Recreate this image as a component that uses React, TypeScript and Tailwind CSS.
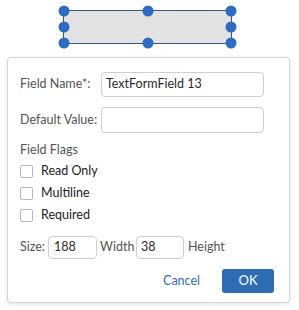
import React from "react";

const handles = [
  "left-0 top-0",
  "left-1/2 top-0",
  "left-full top-0",
  "left-0 top-1/2",
  "left-full top-1/2",
  "left-0 top-full",
  "left-1/2 top-full",
  "left-full top-full",
];

function Checkbox({ label }: { label: string }) {
  return (
    <label className="flex h-[22px] items-center gap-[8px]">
      <span className="h-[13px] w-[13px] rounded-[2px] border border-[#b8b8b8] bg-white" />
      <span className="text-[#1a1a1a]">{label}</span>
    </label>
  );
}

export default function App() {
  return (
    <div
      className="h-[310px] w-[299px] bg-white text-[12.5px] text-[#555]"
      style={{ fontFamily: "Lato, 'Open Sans', sans-serif" }}
    >
      <div className="h-[57px] pt-[10px]">
        <div className="relative ml-[63px] h-[34px] w-[169px] border border-[#3a5578] bg-[#e3e3e3]">
          {handles.map((h) => (
            <span
              key={h}
              className={`absolute ${h} h-[11px] w-[11px] -translate-x-1/2 -translate-y-1/2 rounded-full bg-[#2d6cc0]`}
            />
          ))}
        </div>
      </div>

      <div className="ml-[7px] flex h-[246px] w-[283px] flex-col rounded-[4px] border border-[#d6d6d6] bg-white px-[12px] pt-[14px] shadow-[0_1px_4px_rgba(0,0,0,0.12)]">
        <div className="flex h-[25px] items-center">
          <span className="w-[81px]">Field Name*:</span>
          <div className="flex h-full w-[163px] items-center rounded-[4px] border border-[#cfcfcf] px-[4px] text-[#2a2a2a]">
            TextFormField 13
          </div>
        </div>
        <div className="mt-[10px] flex h-[26px] items-center">
          <span className="w-[81px]">Default Value:</span>
          <div className="h-full w-[163px] rounded-[4px] border border-[#cfcfcf]" />
        </div>
        <div className="mt-[8px] h-[18px] leading-[18px]">Field Flags</div>
        <div className="mt-[1px] flex flex-col">
          <Checkbox label="Read Only" />
          <Checkbox label="Multiline" />
          <Checkbox label="Required" />
        </div>
        <div className="mt-[10px] flex h-[23px] items-center">
          <span className="w-[28px]">Size:</span>
          <div className="flex h-full w-[49px] items-center rounded-[4px] border border-[#cfcfcf] px-[5px] text-[#2a2a2a]">
            188
          </div>
          <span className="ml-[3px] w-[36px]">Width</span>
          <div className="flex h-full w-[48px] items-center rounded-[4px] border border-[#cfcfcf] px-[4px] text-[#2a2a2a]">
            38
          </div>
          <span className="ml-[4px]">Height</span>
        </div>
        <div className="mt-[10px] flex h-[24px] items-center justify-end pr-[3px]">
          <span className="mr-[22px] text-[#2e6db4]">Cancel</span>
          <button className="h-full w-[52px] rounded-[3px] bg-[#2e6db4] text-[13px] text-white">
            OK
          </button>
        </div>
      </div>
    </div>
  );
}
